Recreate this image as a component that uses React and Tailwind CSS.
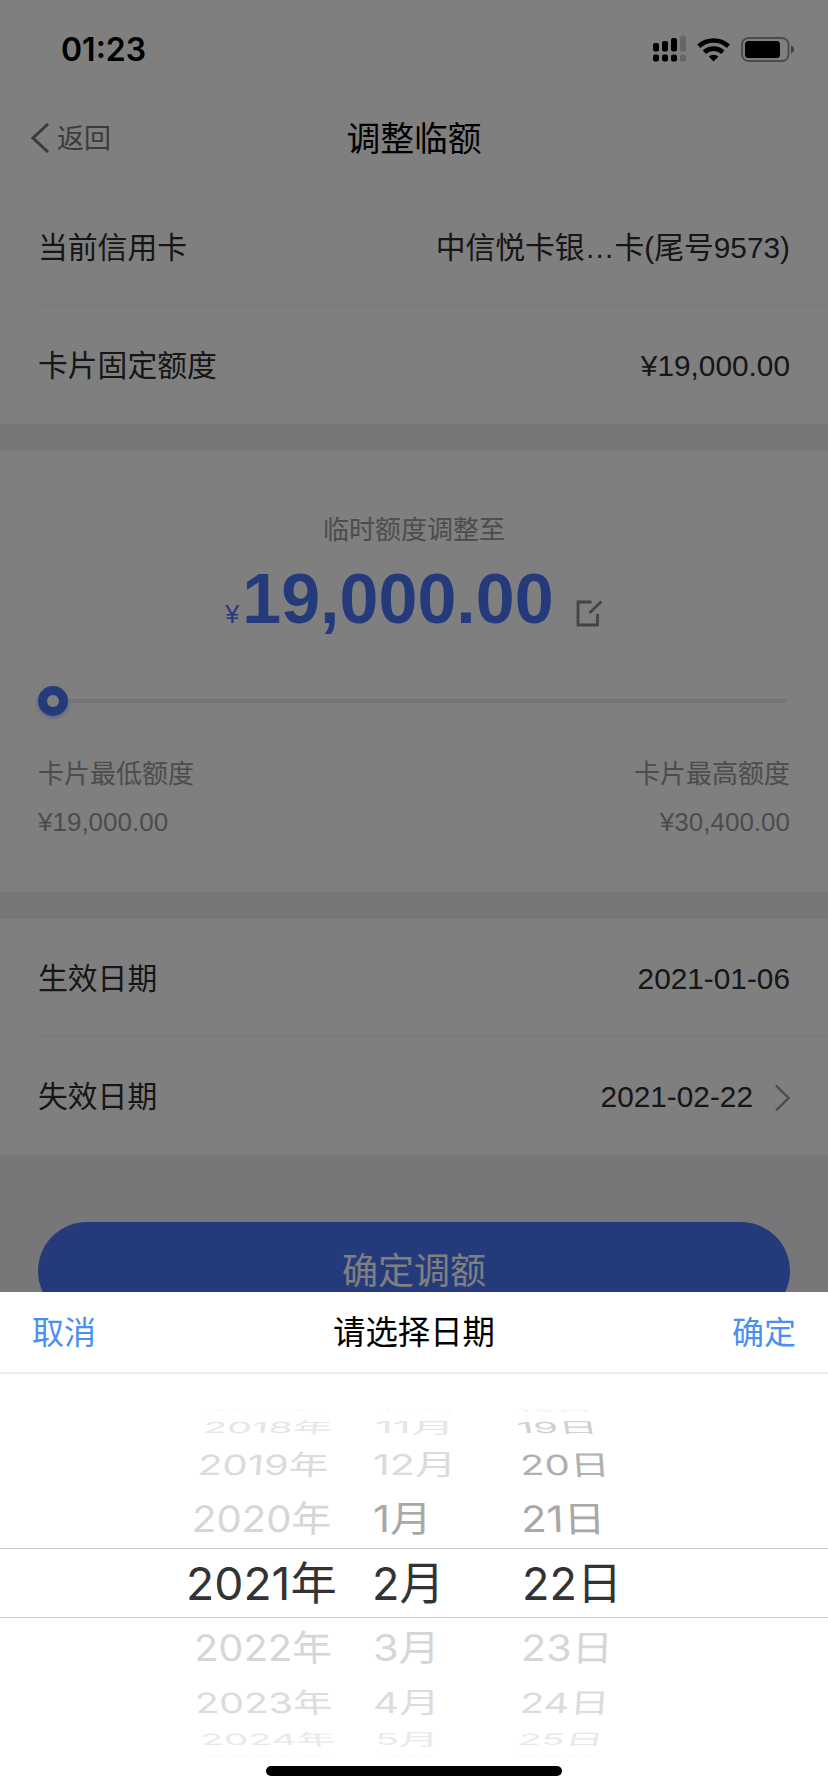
import { clsx } from 'clsx'

const CELLS = [
  { label: '当前信用卡', value: '中信悦卡银…卡(尾号9573)' },
  { label: '卡片固定额度', value: '¥19,000.00' },
]

// x = shift, sx/sy = scale, k = skew in degrees
const WHEEL = [
  { h: 'h-[10px]', sy: 0.08, items: [
    { t: '2017年', x: 18, sx: 0.85, k: -10, c: 'text-[#fafafa]' },
    { t: '10月', x: 4, sx: 0.88, k: 0, c: 'text-[#fafafa]' },
    { t: '18日', x: -7, sx: 0.87, k: 10, c: 'text-[#f4f4f4]' }] },
  { h: 'h-[24px]', sy: 0.34, items: [
    { t: '2018年', x: 16, sx: 0.88, k: -8, c: 'text-[#e6e6e6]' },
    { t: '11月', x: 2, sx: 0.98, k: 0, c: 'text-[#e6e6e6]' },
    { t: '19日', x: -5, sx: 0.89, k: 10, c: 'text-[#d0d0d0]' }] },
  { h: 'h-[50px]', sy: 0.62, items: [
    { t: '2019年', x: 11, sx: 0.89, k: -4, c: 'text-[#dbdbdb]' },
    { t: '12月', x: 0, sx: 0.92, k: 0, c: 'text-[#dbdbdb]' },
    { t: '20日', x: -2, sx: 0.89, k: 4, c: 'text-[#b0b0b0]' }] },
  { h: 'h-[59px]', sy: 0.81, items: [
    { t: '2020年', x: 5, sx: 0.89, k: -2, c: 'text-[#d6d6d6]' },
    { t: '1月', x: 0, sx: 0.93, k: 0, c: 'text-[#a8a8a8]' },
    { t: '21日', x: -1, sx: 0.93, k: 2, c: 'text-[#a8a8a8]' }] },
  { h: 'h-[70px]', sy: 1, on: true, items: [
    { t: '2021年', x: -1, sx: 1.028, k: 0, c: 'text-[#333]' },
    { t: '2月', x: -1, sx: 1, k: 0, c: 'text-[#333]' },
    { t: '22日', x: 0, sx: 1, k: 0, c: 'text-[#333]' }] },
  { h: 'h-[59px]', sy: 0.81, items: [
    { t: '2022年', x: 7, sx: 0.885, k: 2, c: 'text-[#d6d6d6]' },
    { t: '3月', x: 0, sx: 0.92, k: 0, c: 'text-[#d6d6d6]' },
    { t: '23日', x: -1, sx: 0.92, k: -2, c: 'text-[#d6d6d6]' }] },
  { h: 'h-[50px]', sy: 0.62, items: [
    { t: '2023年', x: 8, sx: 0.88, k: 4, c: 'text-[#dcdcdc]' },
    { t: '4月', x: 0, sx: 0.9, k: 0, c: 'text-[#dcdcdc]' },
    { t: '24日', x: -2, sx: 0.89, k: -4, c: 'text-[#dcdcdc]' }] },
  { h: 'h-[24px]', sy: 0.35, items: [
    { t: '2024年', x: 13, sx: 0.865, k: 10, c: 'text-[#e9e9e9]' },
    { t: '5月', x: 2, sx: 0.88, k: 0, c: 'text-[#e9e9e9]' },
    { t: '25日', x: -4, sx: 0.86, k: -12, c: 'text-[#e9e9e9]' }] },
  { h: 'h-[10px]', sy: 0.08, items: [
    { t: '2025年', x: 18, sx: 0.83, k: 10, c: 'text-[#fafafa]' },
    { t: '6月', x: 4, sx: 0.84, k: 0, c: 'text-[#fafafa]' },
    { t: '26日', x: -7, sx: 0.84, k: -10, c: 'text-[#fafafa]' }] },
]

const COLS = ['w-[186px]', 'w-[149px]', 'w-[120px]']

function StatusBar() {
  return (
    <div className="h-[88px] pl-[61px] pr-[33px] pt-[11px] flex items-center justify-between">
      <span className="font-['Inter'] font-semibold text-[32px] leading-none text-black">01:23</span>
      <svg width="142" height="28" viewBox="0 0 142 28" className="mb-[4px] text-black">
        {/* signal */}
        <g fill="currentColor">
          <rect x="0" y="9" width="6" height="8.500" rx="2" />
          <rect x="9" y="7" width="6" height="10.500" rx="2" />
          <rect x="18" y="4" width="6" height="13.500" rx="2" />
          <rect x="27" y="1.500" width="6" height="16" rx="2" opacity=".2" />
          <rect x="0" y="20.500" width="6" height="7" rx="2" />
          <rect x="9" y="20.500" width="6" height="7" rx="2" />
          <rect x="18" y="20.500" width="6" height="7" rx="2" />
          <rect x="27" y="20.500" width="6" height="7" rx="2" opacity=".2" />
        </g>
        {/* wifi */}
        <g fill="none" stroke="currentColor" strokeWidth="4.6">
          <path d="M45.800 12.200a22 22 0 0 1 29.600 0" />
          <path d="M51.400 18.200a13.600 13.600 0 0 1 18.400 0" />
        </g>
        <path d="M60.600 27.500l-4.800-4.900a7.200 7.200 0 0 1 9.600 0z" fill="currentColor" />
        {/* battery */}
        <rect x="89" y="4" width="46.500" height="23" rx="6.500" fill="none" stroke="currentColor" strokeWidth="2" opacity=".4" />
        <rect x="92" y="7" width="35" height="17" rx="3.500" fill="currentColor" />
        <path d="M138 11.500c4 1.200 4 6.800 0 8z" fill="currentColor" opacity=".5" />
      </svg>
    </div>
  )
}

function Cell({ label, value, divider, arrow }) {
  return (
    <div className={clsx('ml-[38px] pr-[38px] pt-[3px] h-[118px] flex items-center justify-between', divider && 'border-b border-[#eff0f3]')}>
      <span>{label}</span>
      <span className="flex items-center">
        {value}
        {arrow && (
          <svg width="15" height="28" viewBox="0 0 15 28" className="ml-[22px]" fill="none" stroke="#999" strokeWidth="2.4">
            <path d="M1 1.500L13.500 14L1 26.500" />
          </svg>
        )}
      </span>
    </div>
  )
}

function Limit({ label, value, right }) {
  return (
    <div className={clsx('flex flex-col gap-[10px] text-[26px] leading-[38px] text-[#999]', right && 'items-end')}>
      <span>{label}</span>
      <span>{value}</span>
    </div>
  )
}

function AmountPanel() {
  return (
    <section className="h-[441px] bg-white px-[38px] pt-[60px]">
      <p className="text-center text-[26px] leading-[38px] text-[#999]">临时额度调整至</p>
      <div className="mt-[7px] h-[86px] flex items-baseline justify-center text-[#4a74f4]">
        <span className="text-[25px] mr-[3px]">¥</span>
        <span className="text-[70px] leading-[86px] font-bold">19,000.00</span>
        <svg width="27" height="27" viewBox="0 0 27 27" className="ml-[22px] translate-y-[4px]" fill="none" stroke="#888" strokeWidth="2.8">
          <path d="M15.500 2H2v23h19.500V14" />
          <path d="M25.300 1.500L13.500 13" />
        </svg>
      </div>
      <div className="mt-[43px] h-[32px] flex items-center">
        <div className="size-[30px] shrink-0 rounded-full bg-[#4a74f4] flex items-center justify-center shadow-[0_2px_5px_rgba(74,116,244,0.4)]">
          <div className="size-3 rounded-full bg-white" />
        </div>
        <div className="h-1 flex-1 mr-1 bg-[#e4e8f0]" />
      </div>
      <div className="mt-[38px] flex justify-between">
        <Limit label="卡片最低额度" value="¥19,000.00" />
        <Limit label="卡片最高额度" value="¥30,400.00" right />
      </div>
    </section>
  )
}

function DatePicker() {
  return (
    <div className="absolute inset-x-0 bottom-0 h-[500px] bg-white flex flex-col">
      <div className="h-[82px] pt-[2px] px-[32px] flex items-center justify-between border-b-2 border-[#eee] text-[32px] leading-none">
        <button className="text-[#4a90f0]">取消</button>
        <span className="text-[32.400px] text-black">请选择日期</span>
        <button className="text-[#4a90f0]">确定</button>
      </div>
      <div className="pt-[31px] font-['Inter','Noto_Sans_CJK_SC',sans-serif] text-[45px] leading-none">
        {WHEEL.map((row) => (
          <div key={row.items[0].t} className={clsx('pl-[187px] flex items-center', row.h, row.on && 'border-y border-[#c8c8c8]')}>
            {row.items.map((it, i) => (
              <div key={it.t} className={COLS[i]}>
                <span
                  className={clsx('inline-block origin-left whitespace-nowrap', it.c)}
                  style={{ transform: `translateX(${it.x}px) skewX(${it.k}deg) scale(${it.sx}, ${row.sy})` }}
                >
                  {it.t}
                </span>
              </div>
            ))}
          </div>
        ))}
      </div>
      <div className="mt-[5px] mx-auto w-[296px] h-[10px] rounded-full bg-black" />
    </div>
  )
}

export default function App() {
  return (
    <div className="relative w-[828px] h-[1792px] overflow-hidden bg-[#eeeff3] font-['Liberation_Sans','Noto_Sans_CJK_SC',sans-serif] text-[29.800px] text-[#2c2c2c]">
      <header className="bg-white">
        <StatusBar />
        <div className="h-[100px] px-[31px] grid grid-cols-3 items-center">
          <div className="flex items-center text-[27px] text-[#777]">
            <svg width="18" height="30" viewBox="0 0 18 30" className="mr-[8px]" fill="none" stroke="currentColor" strokeWidth="3">
              <path d="M17 1L2 15l15 14" />
            </svg>
            <span className="pt-[2px]">返回</span>
          </div>
          <h1 className="pt-[2px] text-center text-[33.800px] text-black">调整临额</h1>
        </div>
      </header>
      <section className="bg-white mb-[27px]">
        {CELLS.map((c, i) => <Cell key={c.label} {...c} divider={i === 0} />)}
      </section>
      <AmountPanel />
      <section className="bg-white mt-[27px]">
        <Cell label="生效日期" value="2021-01-06" divider />
        <Cell label="失效日期" value="2021-02-22" arrow />
      </section>
      <div className="px-[38px] pt-[67px]">
        <button className="w-full h-[98px] pt-[2px] rounded-full bg-[#4a74f4] text-white text-[36px]">确定调额</button>
      </div>
      {/* Mask */}
      <div className="absolute inset-0 bg-black/50" />
      <DatePicker />
    </div>
  )
}
